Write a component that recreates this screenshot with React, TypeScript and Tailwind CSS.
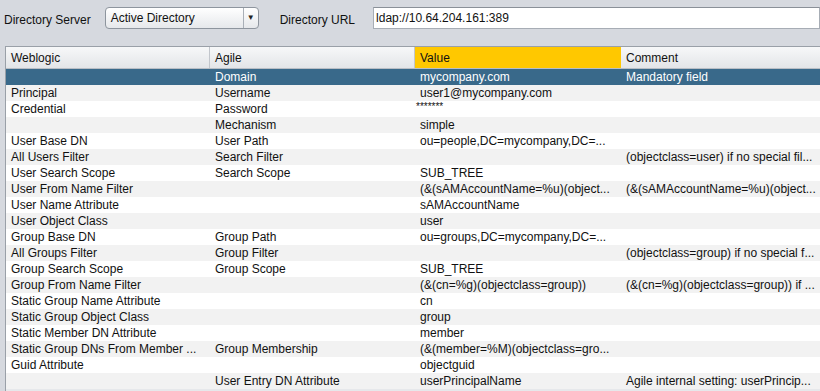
const rows: [string, string, string, string][] = [
  ["", "Domain", "mycompany.com", "Mandatory field"],
  ["Principal", "Username", "user1@mycompany.com", ""],
  ["Credential", "Password", "*******", ""],
  ["", "Mechanism", "simple", ""],
  ["User Base DN", "User Path", "ou=people,DC=mycompany,DC=...", ""],
  ["All Users Filter", "Search Filter", "", "(objectclass=user) if no special fil..."],
  ["User Search Scope", "Search Scope", "SUB_TREE", ""],
  ["User From Name Filter", "", "(&(sAMAccountName=%u)(object...", "(&(sAMAccountName=%u)(object..."],
  ["User Name Attribute", "", "sAMAccountName", ""],
  ["User Object Class", "", "user", ""],
  ["Group Base DN", "Group Path", "ou=groups,DC=mycompany,DC=...", ""],
  ["All Groups Filter", "Group Filter", "", "(objectclass=group) if no special f..."],
  ["Group Search Scope", "Group Scope", "SUB_TREE", ""],
  ["Group From Name Filter", "", "(&(cn=%g)(objectclass=group))", "(&(cn=%g)(objectclass=group)) if ..."],
  ["Static Group Name Attribute", "", "cn", ""],
  ["Static Group Object Class", "", "group", ""],
  ["Static Member DN Attribute", "", "member", ""],
  ["Static Group DNs From Member ...", "Group Membership", "(&(member=%M)(objectclass=gro...", ""],
  ["Guid Attribute", "", "objectguid", ""],
  ["", "User Entry DN Attribute", "userPrincipalName", "Agile internal setting: userPrincip..."],
];

const cols = "grid grid-cols-[204px_205px_206px_1fr]";

export default function App() {
  return (
    <div className="h-[391px] w-[820px] overflow-hidden bg-[#d6d9df] font-['Liberation_Sans',Arial,sans-serif] text-[12px] text-[#111]">
      {/* top form */}
      <div className="flex h-[46px] items-start pt-[7px]">
        <span className="ml-[4px] mt-[4px]">Directory Server</span>
        <div className="ml-[14px] flex h-[22px] w-[154px] items-center rounded-[4px] border border-[#8e959e] bg-gradient-to-b from-[#ffffff] to-[#e6e8eb]">
          <span className="ml-[5px] flex-1">Active Directory</span>
          <div className="flex h-full w-[15px] items-center justify-center border-l border-[#a9afb7] text-[8px] text-[#222]">▼</div>
        </div>
        <span className="ml-[21px] mt-[4px]">Directory URL</span>
        <div className="ml-[18px] flex h-[22px] flex-1 items-center border border-[#a7adb5] border-t-[#8a9098] bg-white pl-[2px]">
          ldap://10.64.204.161:389
        </div>
      </div>

      {/* table */}
      <div className="ml-[5px] border-l border-t border-[#9aa0a8] bg-white">
        <div className={`${cols} h-[22px] border-b border-[#b9bec5] bg-gradient-to-b from-[#f7f8f9] to-[#e3e5e8]`}>
          <div className="flex items-center border-r border-[#c2c6cc] pl-[5px]">Weblogic</div>
          <div className="flex items-center border-r border-[#c2c6cc] pl-[5px]">Agile</div>
          <div className="flex items-center bg-[#ffc800] pl-[5px]">Value</div>
          <div className="flex items-center pl-[5px]">Comment</div>
        </div>
        {rows.map((r, i) => {
          const sel = i === 0;
          const bg = sel ? "bg-[#39698a] text-white" : i % 2 === 1 ? "bg-[#f2f2f2]" : "bg-white";
          return (
            <div key={i} className={`${cols} h-[16px] leading-[16px] ${bg}`}>
              {r.map((c, j) => (
                <div
                  key={j}
                  className={`overflow-hidden whitespace-nowrap ${
                    c === "*******" ? "pl-[1px] text-[10px] leading-[12px]" : "pl-[5px]"
                  }`}
                >
                  {c}
                </div>
              ))}
            </div>
          );
        })}
        <div className="h-[4px] bg-[#e6e8eb]" />
      </div>
    </div>
  );
}
